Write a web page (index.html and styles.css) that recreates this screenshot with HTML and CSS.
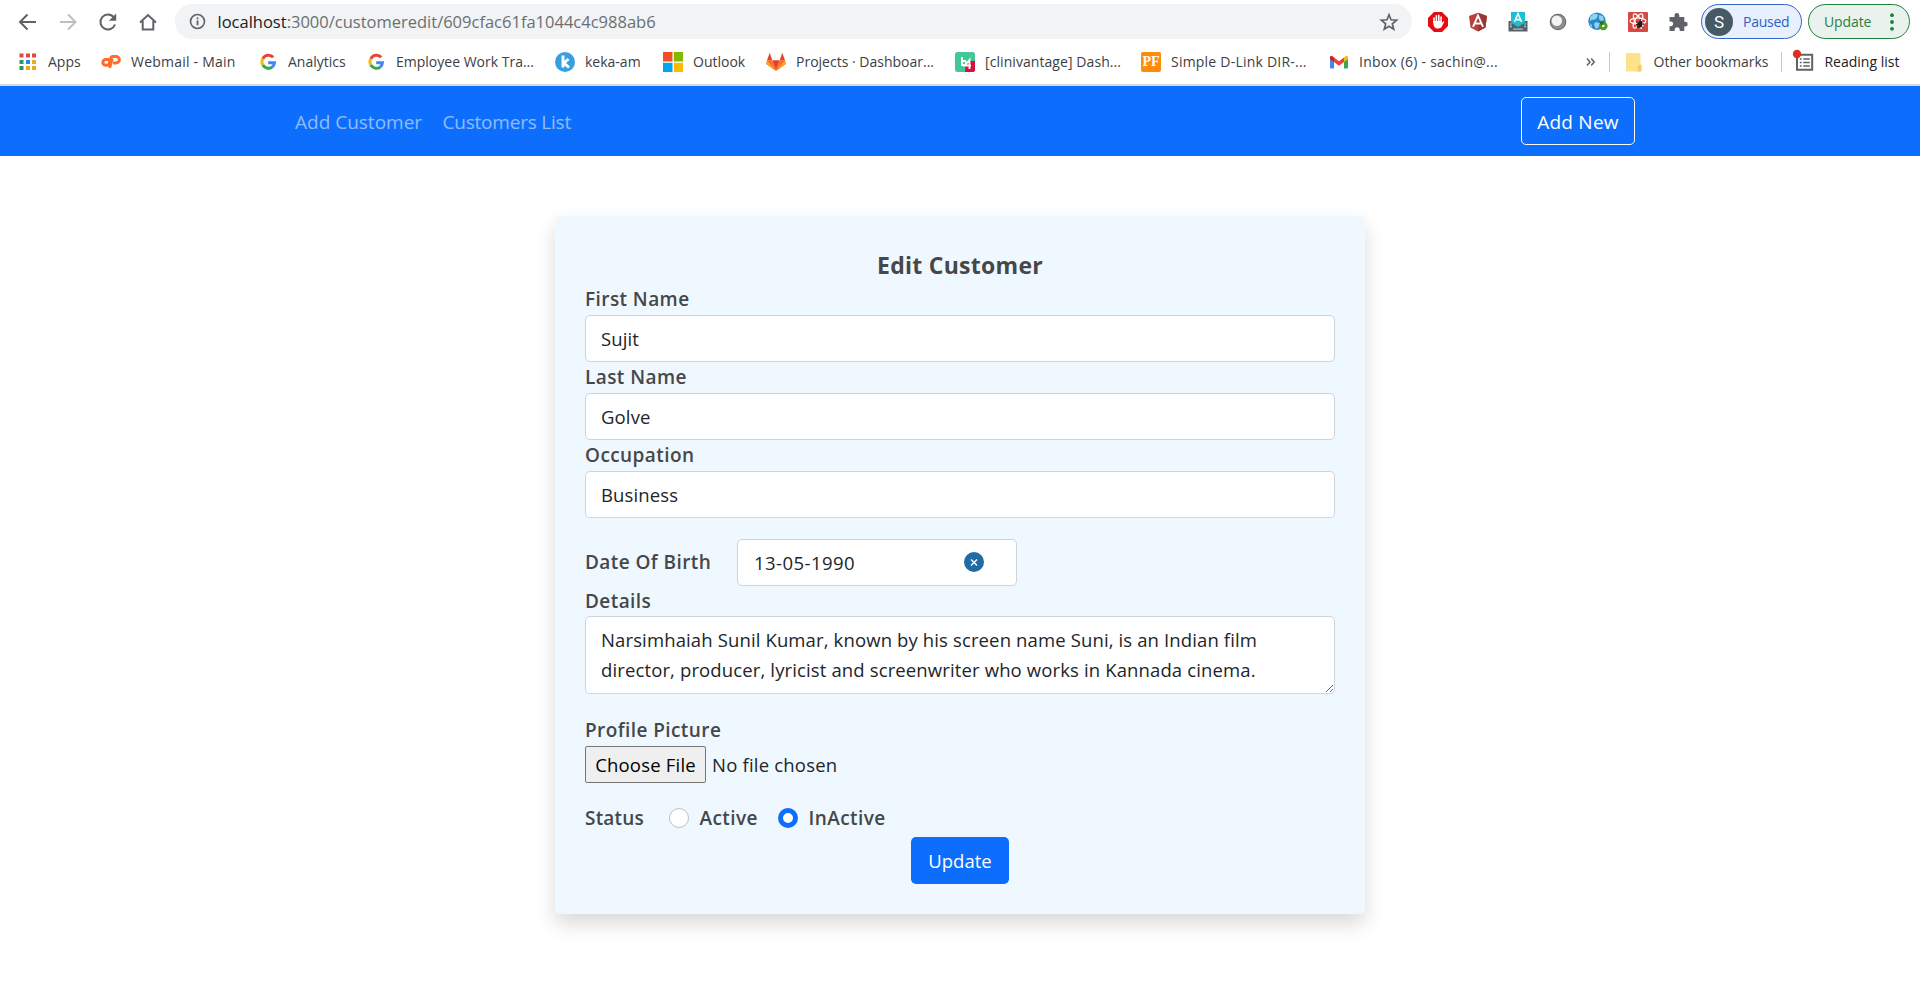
FILE: index.html
```html
<!DOCTYPE html>
<html lang="en">
<head>
<meta charset="utf-8">
<title>Edit Customer</title>
<link rel="stylesheet" href="styles.css">
</head>
<body>
<header class="browser">
  <div class="toolbar">
    <div class="nav-icons">
      <svg class="ico" viewBox="0 0 20 20"><path d="M18 10H2.500M9.500 2.500 2 10l7.500 7.500" fill="none" stroke="#5f6368" stroke-width="2"/></svg>
      <svg class="ico" viewBox="0 0 20 20"><path d="M2 10h15.500M10 2.500l7.500 7.500-7.500 7.500" fill="none" stroke="#bdc0c3" stroke-width="2"/></svg>
      <svg class="ico" viewBox="0 0 20 20"><path d="M15.800 5.300A7.500 7.500 0 1 0 17 12.500" fill="none" stroke="#5f6368" stroke-width="2"/><path d="M18.200 1.500v7.300h-7.300z" fill="#5f6368"/></svg>
      <svg class="ico" viewBox="0 0 20 20"><path d="M2 10.500 10 3l8 7.500M4.700 9v8.500h10.600V9" fill="none" stroke="#5f6368" stroke-width="2"/></svg>
    </div>
    <div class="address">
      <svg class="info" viewBox="0 0 18 18"><circle cx="9" cy="9" r="7.400" fill="none" stroke="#5f6368" stroke-width="1.700"/><path d="M9 8v5M9 4.800v1.800" stroke="#5f6368" stroke-width="1.900"/></svg>
      <span class="url"><span class="host">localhost</span>:3000/customeredit/609cfac61fa1044c4c988ab6</span>
      <svg class="star" viewBox="0 0 20 20"><path d="m10 2.800 2 5 5.600.400-4.300 3.600 1.400 5.400-4.700-3-4.700 3 1.400-5.400L2.400 8.200 8 7.800z" fill="none" stroke="#5f6368" stroke-width="1.700"/></svg>
    </div>
    <div class="extensions">
      <svg class="ico" viewBox="0 0 20 20"><path d="M6 0h8l6 6v8l-6 6H6l-6-6V6z" fill="#e40d12"/><path d="M6 10.500V6M8.400 10V3.800M10.800 10V3.400M13.100 10V5" stroke="#fff" stroke-width="1.600" stroke-linecap="round"/><path d="M5.200 9h8.700v2l1.300-1.600q1.200-.3.900.8L13.200 15.500q-3 2-6 .2Q5.200 14 5.200 9z" fill="#fff"/></svg>
      <svg class="ico" viewBox="0 0 20 20"><path d="m10 .800 9 3.200-1.500 11.600L10 19.500l-7.500-3.900L1 4z" fill="#b7413b"/><path d="m10 .800 9 3.200-1.500 11.600L10 19.500z" fill="#9a3732"/><path d="m5 14.800 5-11.300 5 11.300M7 11.500h6" fill="none" stroke="#fff" stroke-width="1.900"/></svg>
      <svg class="ico" viewBox="0 0 20 20"><path d="M.5 9h19v10.500H.5z" fill="#546069"/><path d="M3 0h14v10.500l-7 4.500-7-4.500z" fill="#1cbfd3"/><path d="m6.500 9.800 3.500-8 3.500 8M7.800 7.600h4.400" fill="none" stroke="#fff" stroke-width="1.600"/><path d="M2 12h1.500M16.500 12H18M2 14.500h2M16 14.500h2M5 17.200h10" stroke="#b5bcc0" stroke-width="1.300"/></svg>
      <svg class="ico" viewBox="0 0 20 20"><circle cx="10" cy="10" r="8.300" fill="#676767"/><circle cx="10" cy="10" r="7.300" fill="#8c8c8c"/><circle cx="8.800" cy="8.800" r="5.200" fill="#f4f4f4"/></svg>
      <svg class="ico" viewBox="0 0 20 20"><circle cx="9" cy="9.200" r="8.700" fill="#2588c9"/><path d="m2 5 4-3.500 4 1-1 3.500-3 2-2-.5-2 2zM11 3l4 1 1 4-3 1-2-2zM7 10l5 1-1 4-3 2-2-4zM1 11l3 2v3z" fill="#91d0ee"/><circle cx="15.300" cy="14" r="2.800" fill="#fff" stroke="#4f9b2c" stroke-width="3"/><path d="m11 9.500 5.500.5-3 4z" fill="#276f25"/></svg>
      <svg class="ico" viewBox="0 0 20 20"><rect width="20" height="20" rx="1" fill="#d54a42"/><g fill="none" stroke="#fff" stroke-width="1.100"><ellipse cx="10" cy="9" rx="8" ry="3"/><ellipse cx="10" cy="9" rx="8" ry="3" transform="rotate(60 10 9)"/><ellipse cx="10" cy="9" rx="8" ry="3" transform="rotate(120 10 9)"/></g><ellipse cx="11.800" cy="12.500" rx="2.300" ry="3.500" transform="rotate(25 11.800 12.500)" fill="#271819"/><path d="m8.500 10 7 6M8 12.500l8-.5M9 16l5-7M12 9l1-2" stroke="#271819" stroke-width="1"/></svg>
      <svg class="ico" viewBox="0 0 20 20"><path d="M1.500 5h5V3.500a2.400 2.400 0 0 1 4.800 0V5h5v4.800h1a2.400 2.400 0 0 1 0 4.800h-1V19h-4.600v-1.200a2.500 2.500 0 0 0-5 0V19H1.500v-4.800h1.300a2.400 2.400 0 0 0 0-4.800H1.500z" fill="#5f6368"/></svg>
    </div>
    <div class="pill profile"><span class="avatar">S</span><span>Paused</span></div>
    <div class="pill update"><span>Update</span><svg class="dots" viewBox="0 0 4 18"><circle cx="2" cy="2.200" r="1.900"/><circle cx="2" cy="9" r="1.900"/><circle cx="2" cy="15.800" r="1.900"/></svg></div>
  </div>
  <div class="bookmarks">
    <nav class="bookmark-list">
      <a class="bm"><svg class="ico" viewBox="0 0 20 20"><g fill="#dc4940"><path d="M1.500 1.500h4v4h-4z"/><path d="M8 1.500h4v4H8z"/><path d="M14 1.500h4v4h-4z"/></g><g fill="#259b5b"><path d="M1.500 8h4v4h-4zM1.500 14h4v4h-4z"/></g><path d="M8 8h4v4H8z" fill="#2a83e8"/><path d="M14 8h4v4h-4zM8 14h4v4H8zM14 14h4v4h-4z" fill="#e9ab1c"/></svg><span>Apps</span></a>
      <a class="bm bm-wide"><svg class="ico" viewBox="0 0 20 20"><path d="M8 7.500H4.800a2.900 2.900 0 0 0 0 5.800h1.400q1.500 0 2-1.700l1.600-5.500q.4-1.600 2-1.600h3.300a3.200 3.200 0 0 1 0 6.500H12M11.200 6.500l-2.600 9.300" fill="none" stroke="#ff6c2c" stroke-width="3"/></svg><span>Webmail - Main</span></a>
      <a class="bm"><svg class="ico" viewBox="0 0 20 20"><use href="#google"/></svg><span>Analytics</span></a>
      <a class="bm"><svg class="ico" viewBox="0 0 20 20"><g id="google" fill="none" stroke-width="3"><path d="M15.200 5.300A6.300 6.300 0 0 0 4.800 6.800" stroke="#ea4335"/><path d="M4.800 6.800a6.300 6.300 0 0 0 0 6.300" stroke="#fbbc05"/><path d="M4.800 13.100a6.300 6.300 0 0 0 9.600 1.700" stroke="#34a853"/><path d="M14.400 14.800a6.300 6.300 0 0 0 2-4H10.200" stroke="#4285f4"/></g></svg><span>Employee Work Tra...</span></a>
      <a class="bm"><svg class="ico" viewBox="0 0 20 20"><circle cx="10" cy="10" r="10" fill="#36a0df"/><path d="M8 3.500v12M13.500 7 9 11l5 4.500" fill="none" stroke="#fff" stroke-width="2.900"/></svg><span>keka-am</span></a>
      <a class="bm"><svg class="ico" viewBox="0 0 20 20"><path d="M0 0h9.500v9.500H0z" fill="#f25022"/><path d="M10.800 0H20v9.500h-9.200z" fill="#7fba00"/><path d="M0 10.800h9.500V20H0z" fill="#00a4ef"/><path d="M10.800 10.800H20V20h-9.200z" fill="#ffb900"/></svg><span>Outlook</span></a>
      <a class="bm"><svg class="ico" viewBox="0 0 20 20"><path d="m10 19 3.800-10.700H6.200z" fill="#e24329"/><path d="M10 19 6.200 8.300H1L.2 12z M10 19l3.800-10.700H19l.8 3.700z" fill="#fc6d26"/><path d="M10 19 .2 12 1 8.300zM10 19l9.800-7-.8-3.700z" fill="#fca326"/><path d="M1 8.300 3.800.800l2.400 7.500zM19 8.300 16.200.800l-2.400 7.500z" fill="#e24329"/></svg><span>Projects · Dashboar...</span></a>
      <a class="bm bm-mid"><svg class="ico" viewBox="0 0 20 20"><rect width="20" height="20" rx="2.500" fill="#41c995"/><path d="M11 9h9v8.500a2.500 2.500 0 0 1-2.500 2.500H10z" fill="#d9103e"/><path d="M7 5v8h3.500q1.500-2.500-.5-4H7M14.500 17V8L10 13.500h6" fill="none" stroke="#fff" stroke-width="1.900"/></svg><span>[clinivantage] Dash...</span></a>
      <a class="bm bm-wide"><span class="pf">PF</span><span>Simple D-Link DIR-...</span></a>
      <a class="bm bm-wide"><svg class="ico" viewBox="0 0 20 20"><path d="M1 5v10.500q0 1 1 1h3V8z" fill="#4285f4"/><path d="M19 5v10.500q0 1-1 1h-3V8z" fill="#34a853"/><path d="m15 5.500 1.500-1.300Q19 3 19 5.500V7l-4 3z" fill="#fbbc04"/><path d="M5 5.500 3.500 4.200Q1 3 1 5.500V7l4 3z" fill="#c5221f"/><path d="m5 5.500 5 3.800 5-3.800V10l-5 3.800L5 10z" fill="#ea4335"/></svg><span>Inbox (6) - sachin@...</span></a>
    </nav>
    <svg class="more" viewBox="0 0 10 10"><path d="m1 1.500 3 3.500-3 3.500M5.200 1.500l3 3.500-3 3.500" fill="none" stroke="#5f6368" stroke-width="1.500"/></svg>
    <i class="divider"></i>
    <a class="bm other"><svg class="ico" viewBox="0 0 20 20"><path d="M2 2q0-1 1-1h12q1.500 0 1.500 1.500V12l1 1v5q0 1.500-1.500 1.500H3q-1 0-1-1z" fill="#fce28a"/><path d="M13.500 19.500v-4.500l1-2h3v5q0 1.500-1.500 1.500z" fill="#f2cf63"/></svg><span>Other bookmarks</span></a>
    <i class="divider"></i>
    <a class="bm reading"><svg class="ico" viewBox="0 0 20 20"><path d="M3 2.800h15.200v15H3z" fill="none" stroke="#5f6368" stroke-width="2"/><path d="M5.800 7h1.900M5.800 10.500h1.900M5.800 14h1.900M9.300 7h6.500M9.300 10.500h6.500M9.300 14h6.500" stroke="#5f6368" stroke-width="1.600"/><circle cx="3" cy="2" r="4.200" fill="#d93025"/></svg><span>Reading list</span></a>
  </div>
</header>
<nav class="navbar">
  <div class="navbar-inner">
    <a class="nav-link">Add Customer</a>
    <a class="nav-link tight">Customers List</a>
    <button class="btn btn-outline">Add New</button>
  </div>
</nav>
<main class="page">
  <form class="card">
    <h1 class="title">Edit Customer</h1>
    <label class="label">First Name</label>
    <input class="control" type="text" value="Sujit">
    <label class="label">Last Name</label>
    <input class="control" type="text" value="Golve">
    <label class="label">Occupation</label>
    <input class="control" type="text" value="Business">
    <div class="dob">
      <label class="label">Date Of Birth</label>
      <div class="date-box"><span class="date">13-05-1990</span><svg class="clear" viewBox="0 0 20 20"><circle cx="10" cy="10" r="10" fill="#216ba5"/><path d="m7 7.500 6 6M13 7.500l-6 6" stroke="#fff" stroke-width="1.400"/></svg></div>
    </div>
    <label class="label">Details</label>
    <textarea class="control details" rows="2">Narsimhaiah Sunil Kumar, known by his screen name Suni, is an Indian film director, producer, lyricist and screenwriter who works in Kannada cinema.</textarea>
    <label class="label picture-label">Profile Picture</label>
    <div class="file"><span class="file-btn">Choose File</span><span class="file-name">No file chosen</span></div>
    <div class="status">
      <span class="label status-label">Status</span>
      <i class="radio"></i><span class="label active-label">Active</span>
      <i class="radio checked"></i><span class="label">InActive</span>
    </div>
    <button class="btn btn-primary">Update</button>
  </form>
</main>
</body>
</html>
```
FILE: styles.css
```css
* { box-sizing: border-box; }
body {
  margin: 0;
  height: 981px;
  overflow: hidden;
  background: #fff;
  color: #212529;
  font-family: "Open Sans", "Noto Sans", sans-serif;
  font-size: 18.5px;
}
svg { display: block; flex: none; overflow: visible; }
.ico { width: 20px; height: 20px; }

.browser { height: 86px; border-bottom: 2px solid #d7dade; background: #fff; }
.toolbar { display: flex; align-items: center; height: 43px; padding-left: 17.5px; }
.nav-icons, .extensions { display: flex; gap: 20px; }
.address {
  display: flex;
  align-items: center;
  width: 1237px;
  height: 35px;
  margin-left: 17.5px;
  padding: 0 13px 0 14px;
  border-radius: 18px;
  background: #f1f3f4;
}
.info { width: 17px; height: 17px; }
.url { flex: 1; margin-left: 11.5px; color: #6b6f73; font-size: 16.5px; line-height: 34px; }
.host { color: #202124; }
.star { width: 20px; height: 20px; }
.extensions { margin-left: 16px; }
.pill {
  display: flex;
  align-items: center;
  height: 35px;
  border-radius: 18px;
  font-size: 14px;
  line-height: 32px;
}
.profile {
  width: 101px;
  margin-left: 13px;
  padding-left: 3px;
  gap: 10px;
  border: 1px solid #3265c8;
  background: #e8f0fe;
  color: #2f5fc4;
  letter-spacing: -.25px;
}
.avatar {
  width: 28px;
  height: 28px;
  border-radius: 50%;
  background: #455a64;
  color: #fff;
  font: 17px/28px Roboto, sans-serif;
  text-align: center;
}
.update {
  width: 102px;
  margin-left: 6px;
  padding: 0 15px;
  justify-content: space-between;
  border: 1px solid #21803f;
  background: #e9f2ec;
  color: #2a8044;
  letter-spacing: -.1px;
}
.dots { width: 4px; height: 18px; fill: #188038; }

.bookmarks { display: flex; align-items: center; height: 38px; padding-left: 18px; }
.bookmark-list {
  display: grid;
  grid-template-columns: 83px 157px 108px 189px 108px 103px 189px 186px 188px 180px;
}
.bm {
  display: flex;
  align-items: center;
  gap: 10px;
  color: #3c4043;
  font-size: 14px;
  line-height: 20px;
  white-space: nowrap;
}
.bm-wide { letter-spacing: .22px; }
.bm-mid { letter-spacing: .07px; }
.pf {
  width: 20px;
  height: 20px;
  border-radius: 2px;
  background: #ff8b0a;
  color: #fff;
  font: bold 14px/20px "Liberation Serif", serif;
  letter-spacing: 0;
  text-align: center;
}
.more { width: 10px; height: 10px; margin-left: 77px; }
.divider { width: 1px; height: 20px; margin-left: 13px; background: #c6c8cb; }
.other { margin-left: 13.5px; }
.reading { margin-left: 12px; color: #202124; }

.navbar { height: 70px; background: #0d6efd; }
.navbar-inner { display: flex; align-items: center; width: 1340px; height: 70px; margin-left: 295px; }
.nav-link { width: 147.5px; padding-top: 2px; color: rgba(255, 255, 255, .55); font-size: 19px; line-height: 26px; }
.tight { letter-spacing: -.21px; }
.btn { border-radius: 5px; color: #fff; font-family: inherit; cursor: pointer; }
.btn-outline {
  width: 114px;
  height: 48px;
  margin-left: auto;
  padding: 1px 0 0;
  border: 1px solid #f8f9fa;
  background: transparent;
  font-size: 19px;
  letter-spacing: .22px;
}

.page { padding-top: 60px; }
.card {
  display: flex;
  flex-direction: column;
  width: 810px;
  height: 698px;
  margin: 0 auto;
  padding: 30px;
  border-radius: 5px;
  background: #eff7ff;
  box-shadow: 0 10px 20px rgba(0, 0, 0, .15);
}
.title {
  height: 38px;
  margin: 0;
  color: #454748;
  font-size: 23px;
  font-weight: 700;
  letter-spacing: .27px;
  line-height: 39px;
  text-align: center;
}
.label {
  flex: none;
  height: 30.5px;
  color: #454748;
  font-size: 19px;
  font-weight: 600;
  letter-spacing: .42px;
  line-height: 31px;
}
.control {
  flex: none;
  width: 750px;
  height: 47.5px;
  padding: 0 15px;
  border: 1px solid #ced4da;
  border-radius: 5px;
  background: #fff;
  color: #212529;
  font: inherit;
  letter-spacing: .13px;
}
.dob { display: flex; align-items: center; height: 47px; margin-top: 20.5px; }
.dob .label { width: 152px; }
.date-box {
  display: flex;
  align-items: center;
  justify-content: space-between;
  width: 280px;
  height: 47px;
  padding: 0 32px 0 16px;
  border: 1px solid #ced4da;
  border-radius: 5px;
  background: #fff;
}
.date { letter-spacing: .45px; }
.clear { width: 20px; height: 20px; margin-top: -1px; }
.details { height: 78px; padding: 8px 15px; line-height: 30px; overflow: hidden; resize: vertical; }
.picture-label { margin-top: 21px; }
.file { display: flex; flex: none; align-items: center; gap: 6px; height: 37px; letter-spacing: .2px; }
.file-btn {
  width: 121px;
  height: 37px;
  border: 1px solid #767676;
  border-radius: 2px;
  background: #efefef;
  color: #000;
  line-height: 35px;
  text-align: center;
}
.status { display: flex; flex: none; align-items: center; height: 36px; margin-top: 18px; }
.status-label { width: 83.5px; letter-spacing: .2px; }
.active-label { width: 78px; }
.radio {
  width: 20px;
  height: 20px;
  margin: -2px 11px 0 0;
  border: 1px solid #bfbfbf;
  border-radius: 50%;
  background: #fff;
}
.checked { border: 5.5px solid #0d6efd; }
.btn-primary {
  flex: none;
  align-self: center;
  width: 98px;
  height: 47px;
  padding: 0;
  border: 0;
  background: #0d6efd;
  font-size: 18.5px;
}
```
